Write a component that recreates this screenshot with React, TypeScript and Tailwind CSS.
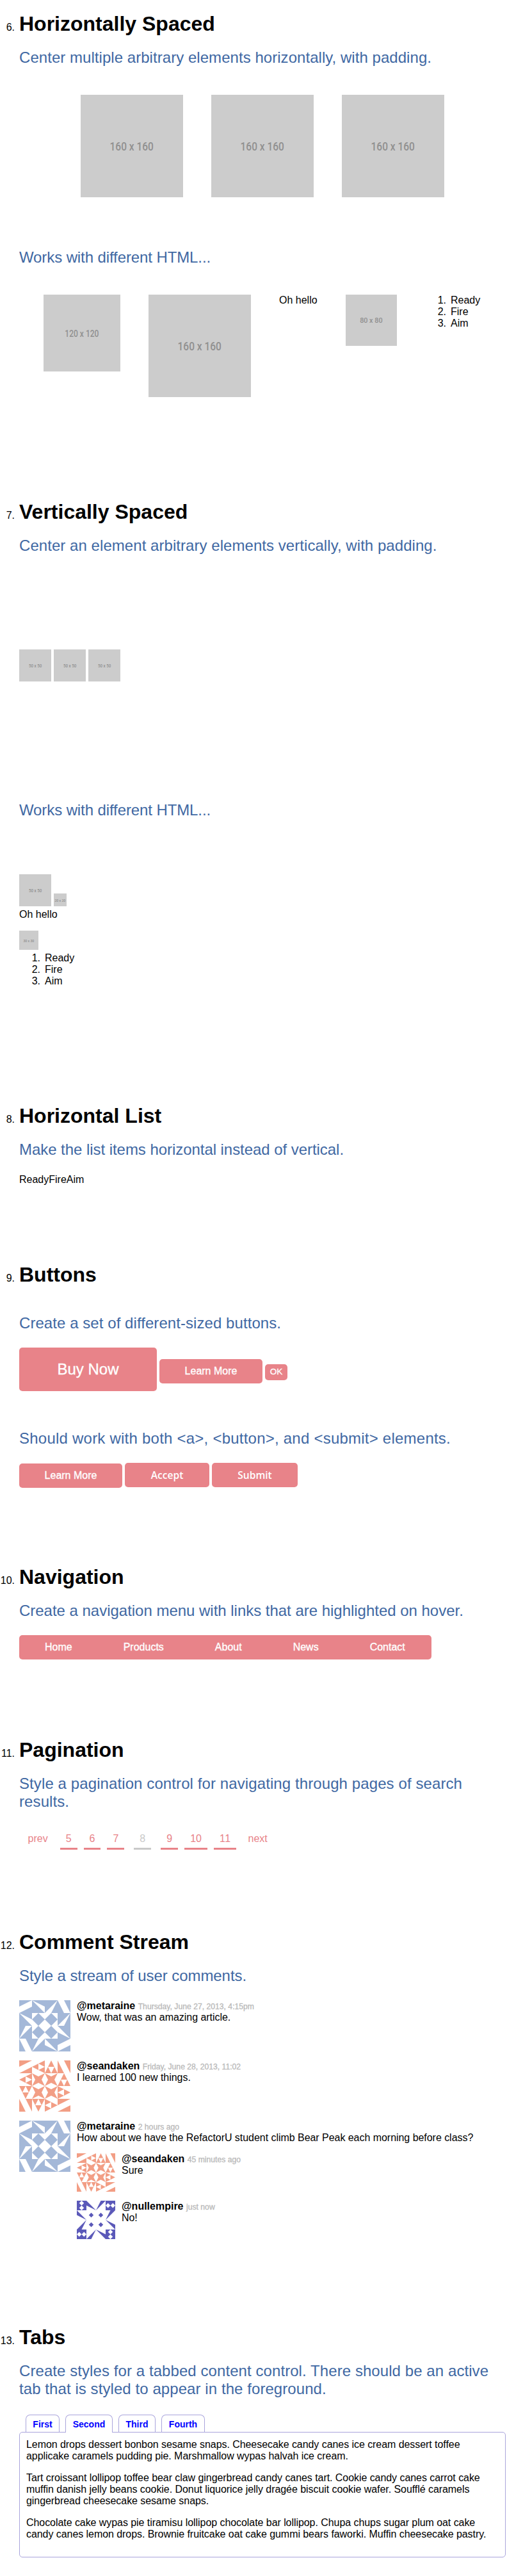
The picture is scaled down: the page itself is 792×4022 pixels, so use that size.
import type { ReactNode } from "react";

const QUARTERS = [0, 90, 180, 270];

function Quarters({ children }: { children: ReactNode }) {
  return (
    <>
      {QUARTERS.map((a) => (
        <g key={a} transform={`rotate(${a} 40 40)`}>
          {children}
        </g>
      ))}
    </>
  );
}

function BlueAvatar() {
  return (
    <svg viewBox="0 0 80 80" className="block size-20">
      <rect width="80" height="80" fill="#a4b8d8" />
      <rect x="20" y="20" width="40" height="40" fill="#fff" />
      <Quarters>
        <path d="M0 10 20 0V10L0 20ZM20 0 40 10V20ZM60 0 40 20H50Z" fill="#fff" />
        <path d="M30 20 40 30 30 40 20 30Z" fill="#a4b8d8" />
      </Quarters>
    </svg>
  );
}

function OrangeAvatar({ className }: { className: string }) {
  return (
    <svg viewBox="0 0 80 80" className={className}>
      <rect width="80" height="80" fill="#fff" />
      <Quarters>
        <path
          d="M0 0H20L0 10ZM20 10V20H0ZM20 10 40 0V20ZM50 0 60 20H40ZM20 20 30 25 40 20 35 30 40 40 30 35 20 40 25 30Z"
          fill="#f29e85"
        />
        <path d="M30 5 40 10 30 15ZM45 10H55L50 20Z" fill="#fff" />
      </Quarters>
    </svg>
  );
}

function PurpleAvatar() {
  return (
    <svg viewBox="0 0 80 80" className="block size-[60px]">
      <rect width="80" height="80" fill="#fff" />
      <Quarters>
        <path d="M0 0H20V20H0ZM20 0 40 20 20 10ZM40 20 50 0H60ZM30 25 35 30 30 35 25 30Z" fill="#5b59b9" />
        <path d="M10 0 15 5 10 10 5 5ZM10 10 15 15 10 20 5 15Z" fill="#fff" />
      </Quarters>
    </svg>
  );
}

const BOXES: Record<number, { box: string; text: string }> = {
  160: { box: "size-40", text: "text-[18px] scale-x-[0.86] pt-0.5" },
  120: { box: "size-[120px]", text: "text-[14px] scale-x-[0.86] pt-0.5" },
  80: { box: "size-20", text: "text-[11.5px] scale-x-[0.94] pt-0.5" },
  50: { box: "size-[50px]", text: "text-[8px] scale-x-[0.78] pt-0.5" },
  30: { box: "size-[30px]", text: "text-[6px] scale-x-[0.86] pt-0.5" },
  20: { box: "size-5", text: "text-[6px] scale-x-[0.86] pt-0.5" },
};

function Box({ size }: { size: number }) {
  return (
    <div className={`flex shrink-0 items-center justify-center bg-[#cccccc] ${BOXES[size].box}`}>
      <span
        className={`whitespace-nowrap leading-none font-medium text-[#909090] font-['Roboto',sans-serif] ${BOXES[size].text}`}
      >
        {size} x {size}
      </span>
    </div>
  );
}

function Section({ n, title, className, children }: { n: number; title: string; className: string; children: ReactNode }) {
  return (
    <section className={className}>
      <div className="flex items-baseline">
        <span className="flex w-[30px] shrink-0 justify-end pr-[7px]">{n}.</span>
        <h2 className="text-[32px] leading-9 font-bold">{title}</h2>
      </div>
      <div className="ml-[30px] w-[760px]">{children}</div>
    </section>
  );
}

function Desc({ className, children }: { className: string; children: ReactNode }) {
  return <p className={`text-2xl leading-7 whitespace-nowrap text-[#4068a3] ${className}`}>{children}</p>;
}

function Steps() {
  return (
    <ol className="w-[88px]">
      {["Ready", "Fire", "Aim"].map((s, i) => (
        <li key={s} className="flex">
          <span className="w-10 shrink-0 pr-[7px] text-right">{i + 1}.</span>
          {s}
        </li>
      ))}
    </ol>
  );
}

const SMOOTH = "[-webkit-text-stroke:0.35px_white] text-white";
const BTN = "block rounded-[5px] bg-[#e88389] text-center whitespace-nowrap";

function Comment({ avatar, name, time, text, children }: { avatar: ReactNode; name: string; time: string; text: string; children?: ReactNode }) {
  return (
    <div className="flex gap-2.5">
      <div className="shrink-0">{avatar}</div>
      <div>
        <p className="whitespace-nowrap">
          <b>{name}</b>{" "}
          <span className="text-[12.2px] leading-none text-[#b9b9b9] [-webkit-text-stroke:0.3px_#b9b9b9]">{time}</span>
        </p>
        <p className="tracking-[-0.04px] whitespace-nowrap">{text}</p>
        {children}
      </div>
    </div>
  );
}

const PAGES = [
  { label: "5", cls: "border-[#e88389] text-[#e88389]" },
  { label: "6", cls: "border-[#e88389] text-[#e88389]" },
  { label: "7", cls: "border-[#e88389] text-[#e88389]" },
  { label: "8", cls: "mx-[5px] border-[#c9c9c9] text-[#c9c9c9]" },
  { label: "9", cls: "border-[#e88389] text-[#e88389]" },
  { label: "10", cls: "border-[#e88389] text-[#e88389]" },
  { label: "11", cls: "border-[#e88389] text-[#e88389] tracking-[0.5px] pr-2" },
];

const TABS = [
  { label: "First", cls: "w-[53px] h-[27px]" },
  { label: "Second", cls: "w-[74px] h-7 bg-white" },
  { label: "Third", cls: "w-[58px] h-[27px]" },
  { label: "Fourth", cls: "w-[68px] h-[27px]" },
];

export default function App() {
  return (
    <main className="h-[4022px] w-[792px] overflow-hidden bg-white pt-[19px] text-base leading-[18px] text-black font-['Liberation_Sans',Arial,sans-serif]">
      <Section n={6} title="Horizontally Spaced" className="h-[762px]">
        <Desc className="mt-[21px] tracking-[0.045px]">Center multiple arbitrary elements horizontally, with padding.</Desc>
        <div className="mt-11 flex justify-center gap-11">
          <Box size={160} />
          <Box size={160} />
          <Box size={160} />
        </div>
        <Desc className="mt-20 tracking-[-0.1px]">Works with different HTML...</Desc>
        <div className="mt-11 flex items-start justify-center gap-11">
          <Box size={120} />
          <Box size={160} />
          <p className="w-[60px] whitespace-nowrap">Oh hello</p>
          <Box size={80} />
          <Steps />
        </div>
      </Section>

      <Section n={7} title="Vertically Spaced" className="h-[943px]">
        <Desc className="mt-[21px] tracking-[0.053px]">Center an element arbitrary elements vertically, with padding.</Desc>
        <div className="mt-[148px] flex gap-1">
          <Box size={50} />
          <Box size={50} />
          <Box size={50} />
        </div>
        <Desc className="mt-[187px] tracking-[-0.1px]">Works with different HTML...</Desc>
        <div className="mt-[86px] flex items-end gap-1">
          <Box size={50} />
          <Box size={20} />
        </div>
        <p className="mt-1 mb-4">Oh hello</p>
        <Box size={30} />
        <div className="mt-1">
          <Steps />
        </div>
      </Section>

      <Section n={8} title="Horizontal List" className="h-[248px]">
        <Desc className="mt-[21px] tracking-[-0.05px]">Make the list items horizontal instead of vertical.</Desc>
        <ul className="mt-6 flex">
          <li>Ready</li>
          <li>Fire</li>
          <li>Aim</li>
        </ul>
      </Section>

      <Section n={9} title="Buttons" className="h-[472px]">
        <Desc className="mt-11 tracking-[0.064px]">Create a set of different-sized buttons.</Desc>
        <div className="mt-6 flex items-baseline gap-1">
          <a className={`${BTN} ${SMOOTH} h-[68px] w-[215px] pt-5 text-2xl leading-7`}>Buy Now</a>
          <a className={`${BTN} ${SMOOTH} h-[38px] w-[161px] pt-2.5`}>Learn More</a>
          <a className={`${BTN} ${SMOOTH} h-[25px] w-[35px] pt-1 text-[13.5px] leading-4`}>OK</a>
        </div>
        <Desc className="mt-[60px] tracking-[0.23px]">{"Should work with both <a>, <button>, and <submit> elements."}</Desc>
        <div className="mt-6 flex items-start gap-1">
          <a className={`${BTN} ${SMOOTH} mt-px h-[38px] w-[161px] pt-2.5`}>Learn More</a>
          <button className={`${BTN} h-[38px] w-[132px] text-[15.6px] font-semibold text-white font-['Open_Sans',sans-serif]`}>
            Accept
          </button>
          <button className={`${BTN} h-[38px] w-[134px] text-[15.6px] font-semibold text-white font-['Open_Sans',sans-serif]`}>
            Submit
          </button>
        </div>
      </Section>

      <Section n={10} title="Navigation" className="h-[270px]">
        <Desc className="mt-[21px] tracking-[-0.02px]">Create a navigation menu with links that are highlighted on hover.</Desc>
        <nav className={`mt-6 flex h-[38px] w-[644px] rounded-[5px] bg-[#e88389] pt-2.5 ${SMOOTH}`}>
          {["Home", "Products", "About", "News", "Contact"].map((l) => (
            <a key={l} className="px-10">
              {l}
            </a>
          ))}
        </nav>
      </Section>

      <Section n={11} title="Pagination" className="h-[300px]">
        <Desc className="mt-[21px] tracking-[0.096px]">
          Style a pagination control for navigating through pages of search
          <br />
          results.
        </Desc>
        <div className="mt-[35px] flex gap-2.5 pl-[4.5px] text-[#e88389]">
          <a className="px-[9px]">prev</a>
          {PAGES.map((p) => (
            <a key={p.label} className={`border-b-3 px-[9px] pb-[5px] ${p.cls}`}>
              {p.label}
            </a>
          ))}
          <a className="px-[9px]">next</a>
        </div>
      </Section>

      <Section n={12} title="Comment Stream" className="h-[617px]">
        <Desc className="mt-[21px] tracking-[-0.077px]">Style a stream of user comments.</Desc>
        <div className="mt-6 flex flex-col gap-3.5">
          <Comment avatar={<BlueAvatar />} name="@metaraine" time="Thursday, June 27, 2013, 4:15pm" text="Wow, that was an amazing article." />
          <Comment avatar={<OrangeAvatar className="block size-20" />} name="@seandaken" time="Friday, June 28, 2013, 11:02" text="I learned 100 new things." />
          <Comment
            avatar={<BlueAvatar />}
            name="@metaraine"
            time="2 hours ago"
            text="How about we have the RefactorU student climb Bear Peak each morning before class?"
          >
            <div className="mt-[15px] flex flex-col gap-3.5">
              <Comment avatar={<OrangeAvatar className="block size-[60px]" />} name="@seandaken" time="45 minutes ago" text="Sure" />
              <Comment avatar={<PurpleAvatar />} name="@nullempire" time="just now" text="No!" />
            </div>
          </Comment>
        </div>
      </Section>

      <Section n={13} title="Tabs" className="h-[391px]">
        <Desc className="mt-[21px] tracking-[0.074px]">
          Create styles for a tabbed content control. There should be an active
          <br />
          tab that is styled to appear in the foreground.
        </Desc>
        <div className="mt-[26px] flex h-[27px] items-start gap-[9px] pl-2.5">
          {TABS.map((t) => (
            <a
              key={t.label}
              className={`relative z-10 block rounded-t-[7px] border border-b-0 border-[#aaa5dc] pt-[5px] text-center text-sm leading-[18px] font-bold text-[#0000ff] ${t.cls}`}
            >
              {t.label}
            </a>
          ))}
        </div>
        <div className="flex h-[196px] flex-col gap-4 rounded-[5px] border border-[#aaa5dc] px-2.5 pt-2.5 tracking-[-0.06px] whitespace-nowrap">
          <p>
            Lemon drops dessert bonbon sesame snaps. Cheesecake candy canes ice cream dessert toffee
            <br />
            applicake caramels pudding pie. Marshmallow wypas halvah ice cream.
          </p>
          <p>
            Tart croissant lollipop toffee bear claw gingerbread candy canes tart. Cookie candy canes carrot cake
            <br />
            muffin danish jelly beans cookie. Donut liquorice jelly dragée biscuit cookie wafer. Soufflé caramels
            <br />
            gingerbread cheesecake sesame snaps.
          </p>
          <p>
            Chocolate cake wypas pie tiramisu lollipop chocolate bar lollipop. Chupa chups sugar plum oat cake
            <br />
            candy canes lemon drops. Brownie fruitcake oat cake gummi bears faworki. Muffin cheesecake pastry.
          </p>
        </div>
      </Section>
    </main>
  );
}
